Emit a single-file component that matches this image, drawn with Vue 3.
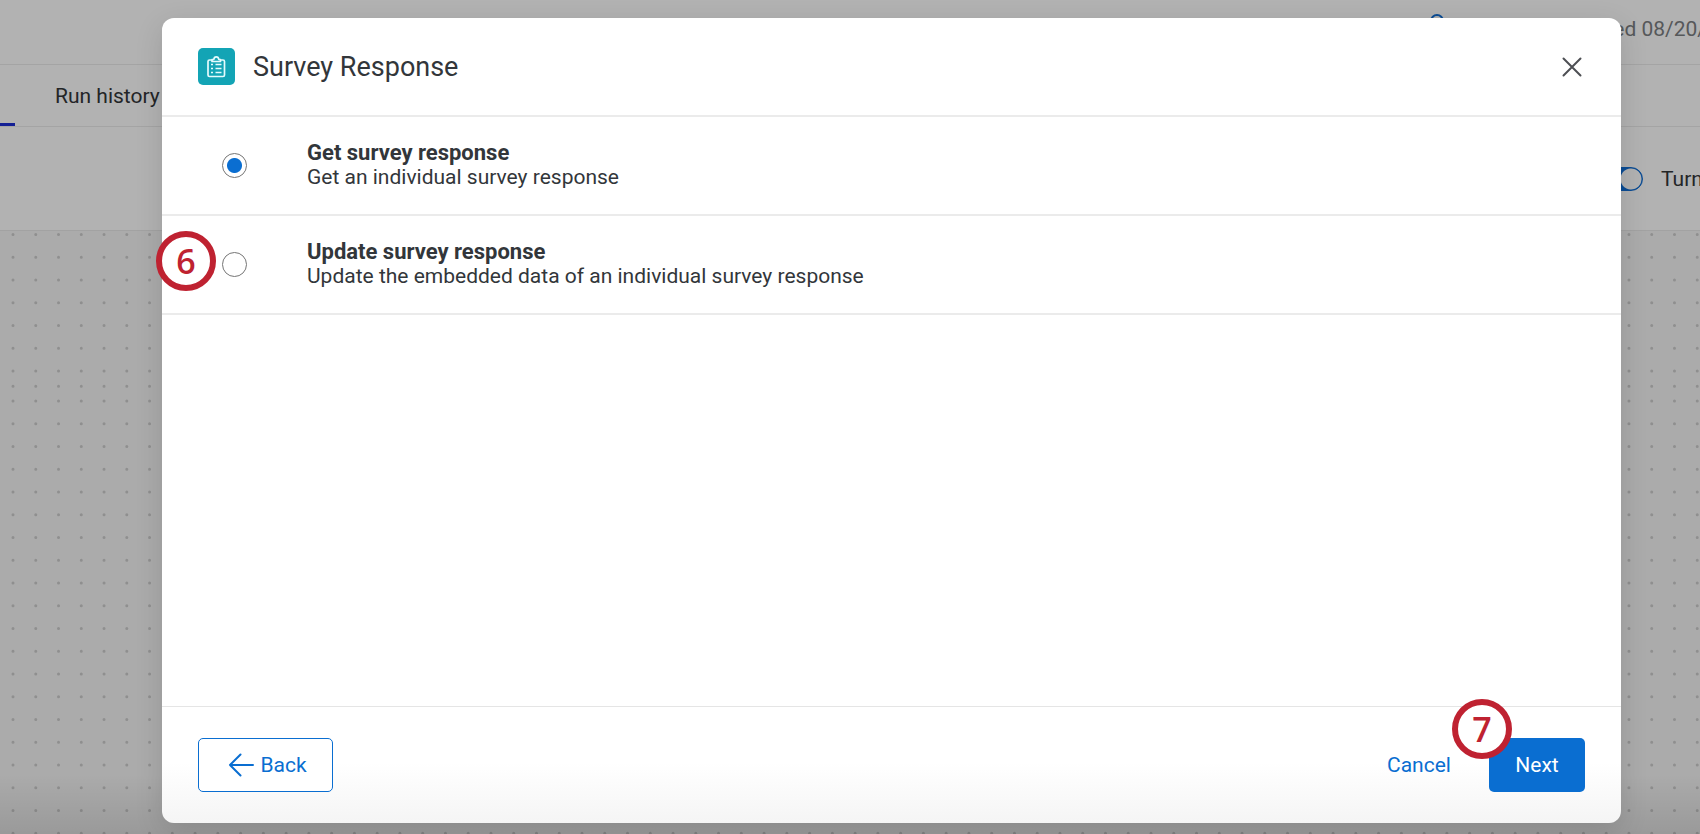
<script setup>
import { ref } from 'vue'

const choice = ref('get')
const enabled = ref(true)
const options = [
  { id: 'get', title: 'Get survey response', text: 'Get an individual survey response' },
  { id: 'update', title: 'Update survey response', text: 'Update the embedded data of an individual survey response', step: 6 },
]

// Two tiled dot grids, joined by one closer row
const pitch = 22.75
const rows = [
  ...Array.from({ length: 7 }, (_, i) => 3.5 + i * pitch),
  155.2,
  ...Array.from({ length: 20 }, (_, i) => 170 + i * pitch),
]
</script>

<template>
  <div class="app">
    <div class="page">
      <header class="topbar">
        <svg class="status" viewBox="0 0 16 16" aria-hidden="true"><circle cx="8" cy="8" r="6" /></svg>
        <span class="saved">Saved 08/20/</span>
      </header>
      <nav class="tabs">
        <span class="tab-active"></span>
        <a href="#history" class="tab">Run history</a>
      </nav>
      <div class="toolbar">
        <label class="toggle">
          <input v-model="enabled" type="checkbox" role="switch" />
          <span>Turn</span>
        </label>
      </div>
      <svg class="canvas" aria-hidden="true">
        <line v-for="y in rows" :key="y" x1="13" :y1="y" x2="100%" :y2="y" />
      </svg>
      <div class="fade"></div>
    </div>

    <section class="modal" role="dialog" aria-labelledby="dialog-title">
      <header class="head">
        <span class="logo">
          <svg viewBox="0 0 37 37" aria-hidden="true">
            <path d="M14 12h-2.500q-1.500 0-1.500 1.500v13.500q0 1.500 1.500 1.500h13.500q1.500 0 1.500-1.500v-13.500q0-1.500-1.500-1.500h-2.500M14 11.500v2h8.500v-2h-1.700q-.3-2.700-2.500-2.700t-2.500 2.700z" />
            <path d="M13 16.500h2M13 20.500h2M13 24.500h2M17.500 16.500h6M17.500 20.500h6M17.500 24.500h6" />
          </svg>
        </span>
        <h1 id="dialog-title">Survey Response</h1>
        <button class="close" type="button" aria-label="Close">
          <svg viewBox="0 0 20 20" aria-hidden="true"><path d="M1.500 1.500l17 17M18.500 1.500l-17 17" /></svg>
        </button>
      </header>

      <div class="options">
        <label v-for="o in options" :key="o.id" class="option">
          <span v-if="o.step" class="badge badge-option">{{ o.step }}</span>
          <input v-model="choice" type="radio" name="task" :value="o.id" />
          <span class="copy"><strong>{{ o.title }}</strong><span>{{ o.text }}</span></span>
        </label>
      </div>

      <footer class="foot">
        <button class="btn back" type="button">
          <svg viewBox="0 0 26 24" aria-hidden="true"><path d="M25 12H2M12.500 1.500L2 12l10.500 10.500" /></svg>
          Back
        </button>
        <button class="btn cancel" type="button">Cancel</button>
        <button class="btn next" type="button">Next<span class="badge badge-next">7</span></button>
      </footer>
    </section>
  </div>
</template>

<style>
body {
  margin: 0;
  overflow: hidden;
}
</style>

<style scoped>
.app {
  position: relative;
  display: flex;
  flex-direction: column;
  height: 100vh;
  box-sizing: border-box;
  padding: 18px 79px 11px 162px;
  overflow: hidden;
  font-family: Roboto, "Liberation Sans", sans-serif;
  font-size: 21px;
  line-height: 24px;
  color: #32363a;
}
.app * { box-sizing: border-box; }
.page {
  position: absolute;
  inset: 0;
  display: flex;
  flex-direction: column;
  background: #b2b2b2;
  color: #232527;
}
.topbar {
  display: flex;
  flex: none;
  justify-content: flex-end;
  align-items: flex-start;
  height: 65px;
  padding-top: 13px;
  border-bottom: 1px solid #a4a4a4;
  white-space: nowrap;
}
.status { flex: none; width: 16px; height: 16px; margin-right: 37px; }
.status circle { fill: none; stroke: #0b4c94; stroke-width: 2; }
.saved { flex: none; width: 224px; margin-right: -6px; padding-top: 4px; color: #56585a; text-align: right; }
.tabs {
  display: flex;
  flex: none;
  align-items: stretch;
  height: 62px;
  border-bottom: 1px solid #a4a4a4;
}
.tab-active { width: 15px; border-bottom: 3px solid #131f94; }
.tab { padding: 19px 0 0 40px; color: inherit; text-decoration: none; }
.toolbar {
  display: flex;
  flex: none;
  justify-content: flex-end;
  align-items: center;
  height: 104px;
  border-bottom: 1px solid #a2a2a2;
}
.toggle { display: flex; align-items: center; gap: 18px; width: 99px; white-space: nowrap; }
.toggle input {
  flex: none;
  appearance: none;
  width: 42px;
  height: 24px;
  margin: 0;
  border: 1px solid #0b4c94;
  border-radius: 12px;
  background: radial-gradient(circle at 29px 11px, #b2b2b2 10px, #0b4c94 11px);
}
.canvas { flex: 1; width: 100%; min-height: 0; background: #ababab; }
.canvas line {
  stroke: #8f8f8f;
  stroke-width: 3;
  stroke-linecap: round;
  stroke-dasharray: 0 22.76;
}
.fade {
  position: absolute;
  inset: auto 0 0;
  height: 60px;
  background: linear-gradient(transparent, rgba(0, 0, 0, 0.1));
}
.modal {
  position: relative;
  display: flex;
  flex: 1;
  flex-direction: column;
  min-height: 0;
  border-radius: 12px;
  background: linear-gradient(#fff calc(100% - 60px), #f5f5f5);
  box-shadow: 0 8px 28px rgba(0, 0, 0, 0.13);
}
.head {
  display: flex;
  align-items: center;
  height: 99px;
  padding: 0 36px;
  border-bottom: 2px solid #ebebeb;
}
.logo { width: 37px; height: 37px; border-radius: 5px; background: #13a4b5; }
.logo svg { display: block; width: 37px; height: 37px; }
.logo path { fill: none; stroke: #e4fbfd; stroke-width: 1.700; stroke-linejoin: round; }
h1 { flex: 1; margin: 0 0 0 18px; font-size: 27px; line-height: 36px; font-weight: 400; }
button { font: inherit; cursor: pointer; }
.close { display: flex; width: 26px; height: 26px; padding: 3px; border: 0; background: none; }
.close svg { width: 20px; height: 20px; }
.close path { fill: none; stroke: #4d4f53; stroke-width: 2; stroke-linecap: round; }
.options { flex: 1; }
.option {
  position: relative;
  display: flex;
  align-items: center;
  height: 99px;
  padding-left: 60px;
  border-bottom: 2px solid #ebebeb;
}
.option input {
  appearance: none;
  width: 25px;
  height: 25px;
  margin: 0 60px 0 0;
  border: 1px solid #757575;
  border-radius: 50%;
  background: #fff;
}
.option input:checked { background: radial-gradient(circle, #0a6ed1 7px, #fff 8px); }
.copy { display: flex; flex-direction: column; padding-bottom: 2px; }
.copy strong { font-size: 22px; }
.foot {
  display: flex;
  align-items: center;
  height: 117px;
  padding: 0 36px;
  border-top: 1px solid #e5e5e5;
}
.btn {
  position: relative;
  display: flex;
  align-items: center;
  justify-content: center;
  height: 54px;
  padding: 0;
  border: 0;
  border-radius: 5px;
  background: none;
  color: #0a6ed1;
}
.back { gap: 6px; width: 135px; margin-right: auto; padding-left: 4px; border: 1px solid #0a6ed1; background: #fff; }
.back svg { width: 26px; height: 24px; }
.back path { fill: none; stroke: #0a6ed1; stroke-width: 2; stroke-linecap: round; stroke-linejoin: round; }
.cancel { width: 66px; margin-right: 37px; }
.next { width: 96px; background: #0a6ed1; color: #fff; }
.badge {
  position: absolute;
  display: flex;
  align-items: center;
  justify-content: center;
  width: 60px;
  height: 60px;
  border: 6px solid #bf2231;
  border-radius: 50%;
  background: #fff;
  color: #bf2231;
  font-family: "Open Sans", "Noto Sans", sans-serif;
  font-size: 34px;
  font-weight: 600;
  line-height: 40px;
}
.badge-option { left: -6px; top: 15px; }
.badge-next { left: -37px; top: -39px; }
</style>
